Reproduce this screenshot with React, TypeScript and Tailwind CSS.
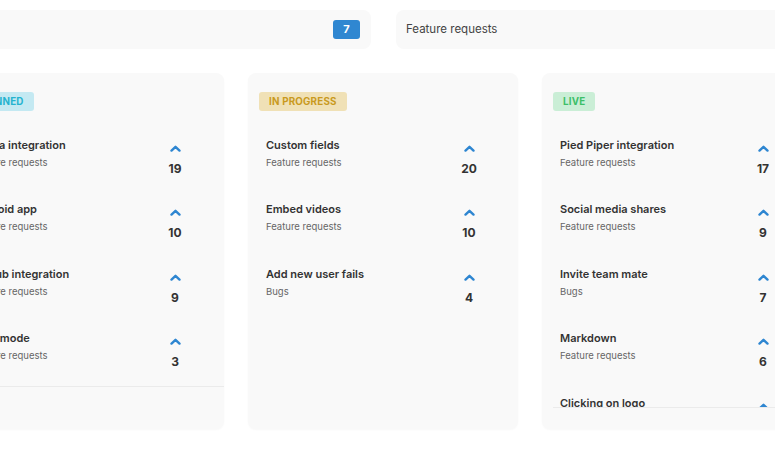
import React from "react";

type Item = { title: string; cat: string; votes: number };
type Col = { label: string; badge: string; line: boolean; items: Item[] };

const cols: Col[] = [
  {
    label: "Planned",
    badge: "bg-[#c4e9f2] text-[#25b3cf]",
    line: true,
    items: [
      { title: "Asana integration", cat: "Feature requests", votes: 19 },
      { title: "Android app", cat: "Feature requests", votes: 10 },
      { title: "GitHub integration", cat: "Feature requests", votes: 9 },
      { title: "Dark mode", cat: "Feature requests", votes: 3 },
    ],
  },
  {
    label: "In progress",
    badge: "bg-[#f0e1b6] text-[#c99a1e]",
    line: false,
    items: [
      { title: "Custom fields", cat: "Feature requests", votes: 20 },
      { title: "Embed videos", cat: "Feature requests", votes: 10 },
      { title: "Add new user fails", cat: "Bugs", votes: 4 },
    ],
  },
  {
    label: "Live",
    badge: "bg-[#caeed6] text-[#3cbf68]",
    line: true,
    items: [
      { title: "Pied Piper integration", cat: "Feature requests", votes: 17 },
      { title: "Social media shares", cat: "Feature requests", votes: 9 },
      { title: "Invite team mate", cat: "Bugs", votes: 7 },
      { title: "Markdown", cat: "Feature requests", votes: 6 },
      { title: "Clicking on logo", cat: "Bugs", votes: 5 },
    ],
  },
];

function Chevron() {
  return (
    <svg width="11" height="7" viewBox="0 0 11 7" className="block">
      <path
        d="M1.5 5.6 L5.5 1.8 L9.5 5.6"
        fill="none"
        stroke="#2e86d1"
        strokeWidth="2.4"
        strokeLinecap="round"
        strokeLinejoin="round"
      />
    </svg>
  );
}

export default function App() {
  return (
    <div className="w-[775px] h-[450px] overflow-hidden bg-white font-['Inter','Liberation_Sans',sans-serif]">
      <div className="ml-[-46px] w-[859px] pt-[10px]">
        <div className="grid grid-cols-2 gap-[25px]">
          <div className="h-[39px] rounded-lg bg-[#f9f9f9] flex items-center justify-between pl-[10px] pr-[11px]">
            <span className="text-[11.5px] text-[#444]">Bugs</span>
            <span className="h-[19px] w-[27px] rounded-[3px] bg-[#2f87d1] text-white text-[11px] font-bold flex items-center justify-center">
              7
            </span>
          </div>
          <div className="h-[39px] rounded-lg bg-[#f9f9f9] flex items-center justify-between pl-[10px] pr-[11px]">
            <span className="text-[11.5px] text-[#444]">Feature requests</span>
            <span className="h-[19px] w-[27px] rounded-[3px] bg-[#2f87d1] text-white text-[11px] font-bold flex items-center justify-center">
              12
            </span>
          </div>
        </div>
        <div className="mt-[24px] flex gap-[24px]">
          {cols.map((c) => (
            <div
              key={c.label}
              className="w-[270px] h-[356px] shrink-0 rounded-lg bg-[#f9f9f9] shadow-[0_1px_2px_rgba(0,0,0,0.03)] pt-[19px] pl-[11px] flex flex-col"
            >
              <span
                className={`self-start h-[19px] px-[10px] rounded-[3px] text-[9.8px] font-bold uppercase tracking-[0.2px] leading-[19px] ${c.badge}`}
              >
                {c.label}
              </span>
              <div
                className={`mt-[17px] max-h-[280px] overflow-hidden ${
                  c.line ? "border-b border-[#ebebeb]" : ""
                }`}
              >
                {c.items.map((it) => (
                  <div
                    key={it.title}
                    className="h-[64.4px] flex justify-between pl-[7px] pr-[37px] pt-[8px]"
                  >
                    <div>
                      <div className="text-[11px] font-semibold leading-[18px] text-[#333]">
                        {it.title}
                      </div>
                      <div className="text-[9.5px] leading-[17px] text-[#666]">
                        {it.cat}
                      </div>
                    </div>
                    <div className="w-[24px] flex flex-col items-center">
                      <div className="mt-[9px]">
                        <Chevron />
                      </div>
                      <div className="mt-[8px] text-[12px] font-bold leading-[18px] text-[#333]">
                        {it.votes}
                      </div>
                    </div>
                  </div>
                ))}
              </div>
            </div>
          ))}
        </div>
      </div>
    </div>
  );
}
